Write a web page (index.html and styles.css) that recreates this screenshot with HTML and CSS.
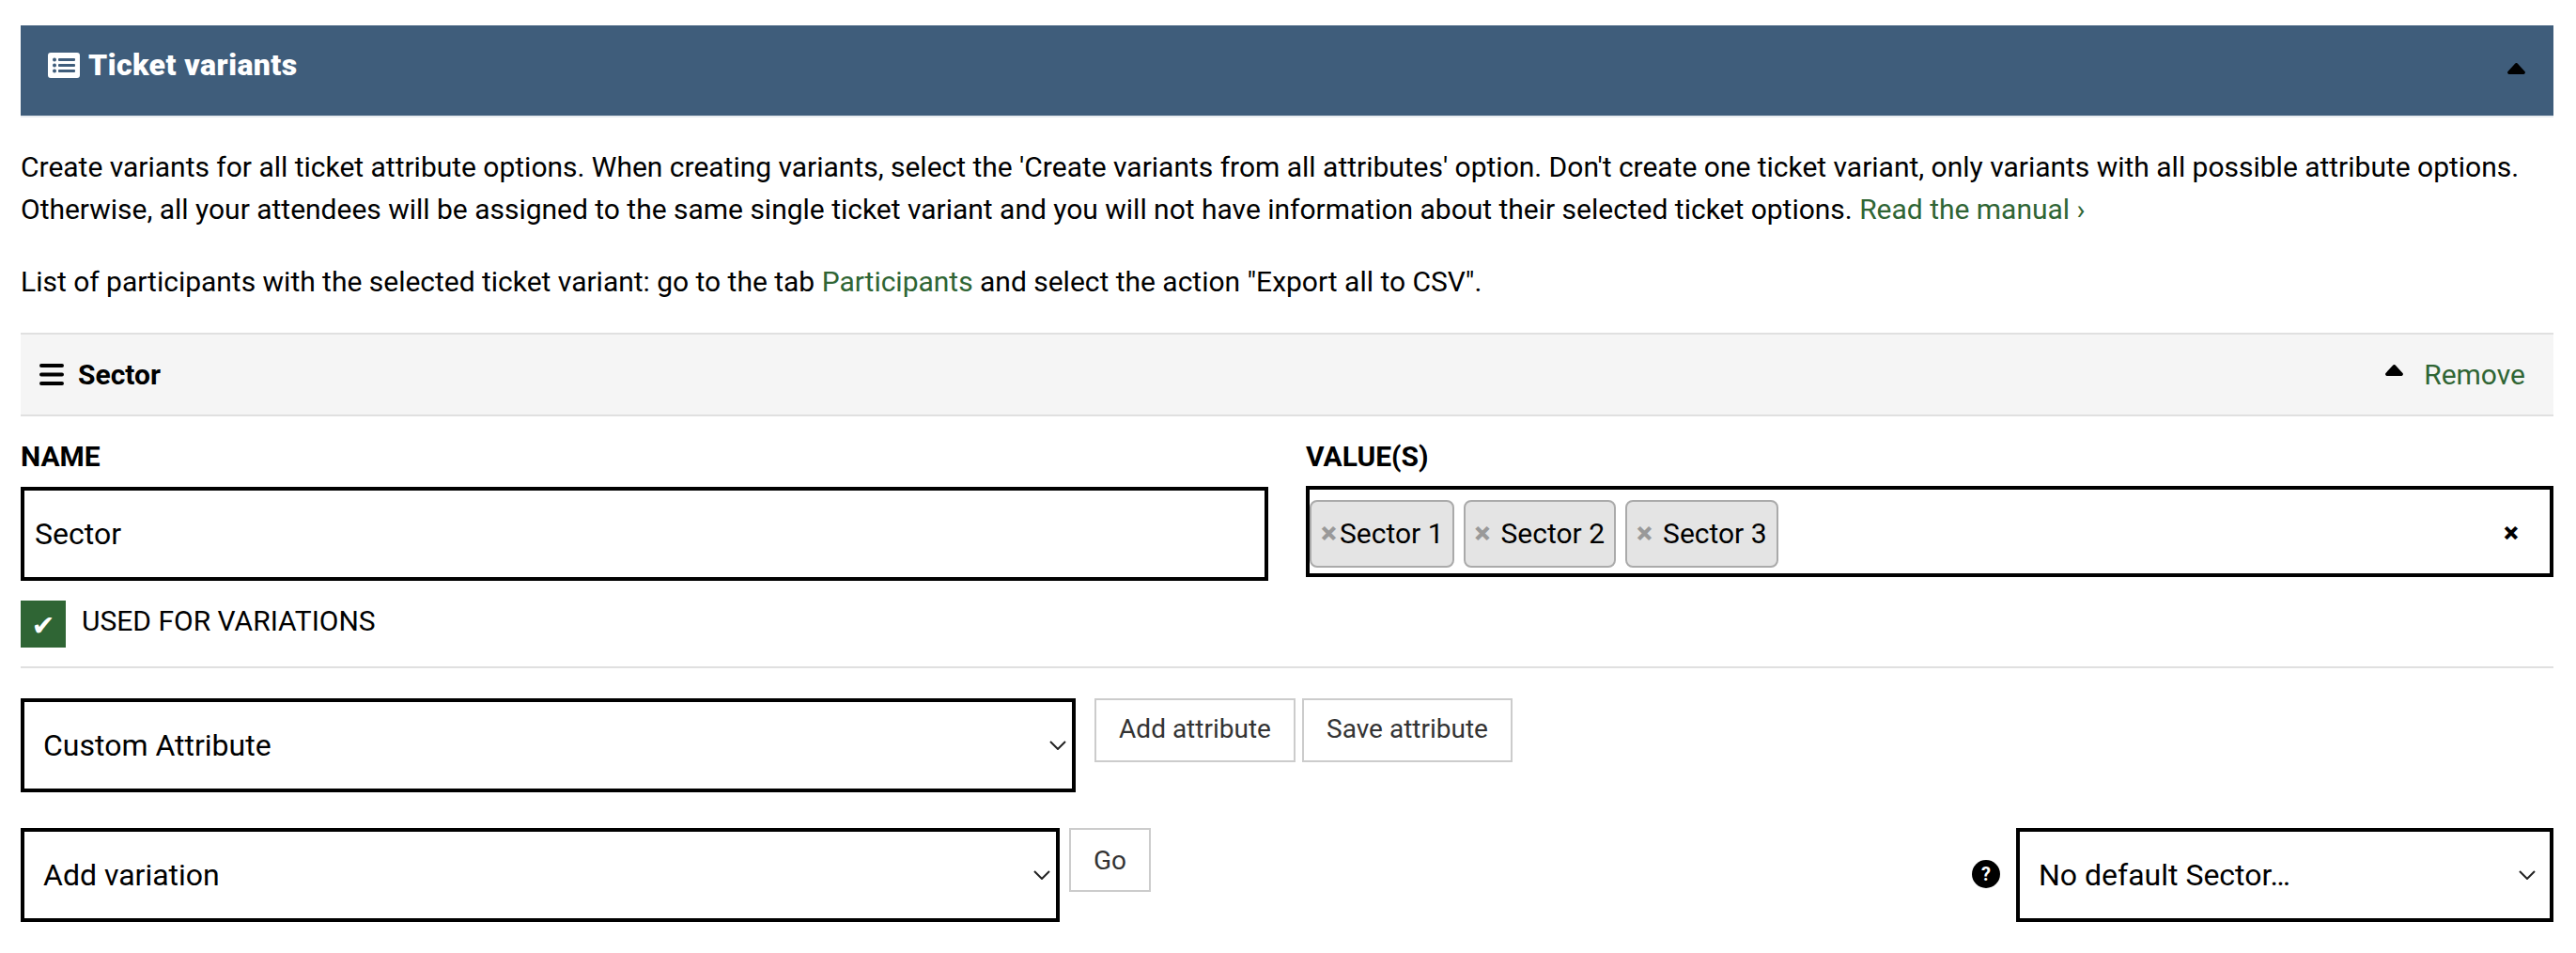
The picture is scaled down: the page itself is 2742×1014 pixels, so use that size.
FILE: index.html
```html
<!DOCTYPE html>
<html lang="en">
<head>
<meta charset="utf-8">
<title>Ticket variants</title>
<link rel="stylesheet" href="styles.css">
</head>
<body>
<main class="panel">
  <header class="panel-head">
    <h2 class="panel-title">
      <svg class="list-icon" viewBox="0 0 34 27" aria-hidden="true"><path fill="#fff" fill-rule="evenodd" d="M3 0h28a3 3 0 0 1 3 3v21a3 3 0 0 1-3 3H3a3 3 0 0 1-3-3V3a3 3 0 0 1 3-3zM12 6a1 1 0 0 0-1 1v1a1 1 0 0 0 1 1h16a1 1 0 0 0 1-1V7a1 1 0 0 0-1-1zM12 12a1 1 0 0 0-1 1v1a1 1 0 0 0 1 1h16a1 1 0 0 0 1-1v-1a1 1 0 0 0-1-1zM12 18a1 1 0 0 0-1 1v1a1 1 0 0 0 1 1h16a1 1 0 0 0 1-1v-1a1 1 0 0 0-1-1zM7 5.500a2 2 0 1 0 0 4 2 2 0 0 0 0-4zM7 11.500a2 2 0 1 0 0 4 2 2 0 0 0 0-4zM7 17.500a2 2 0 1 0 0 4 2 2 0 0 0 0-4z"/></svg>
      Ticket variants
    </h2>
    <svg class="caret" viewBox="0 0 19 12" aria-hidden="true"><path d="M8.300 .6a1.600 1.600 0 0 1 2.400 0l7.800 8.300c.9 1 .3 3-1.200 3H1.700C.2 11.900-.4 9.900.5 8.900z"/></svg>
  </header>

  <p class="intro">Create variants for all ticket attribute options. When creating variants, select the 'Create variants from all attributes' option. Don't create one ticket variant, only variants with all possible attribute options. Otherwise, all your attendees will be assigned to the same single ticket variant and you will not have information about their selected ticket options. <a href="#">Read the manual ›</a></p>
  <p class="intro intro-second">List of participants with the selected ticket variant: go to the tab <a href="#">Participants</a> and select the action "Export all to CSV".</p>

  <section class="attr-head">
    <div class="attr-name">
      <svg class="menu-icon" viewBox="0 0 26 23" aria-hidden="true"><path d="M2 2h22M2 11.500h22M2 21h22"/></svg>
      <strong>Sector</strong>
    </div>
    <div class="attr-actions">
      <svg class="caret" viewBox="0 0 19 12" aria-hidden="true"><path d="M8.300 .6a1.600 1.600 0 0 1 2.400 0l7.800 8.300c.9 1 .3 3-1.200 3H1.700C.2 11.900-.4 9.900.5 8.900z"/></svg>
      <a href="#">Remove</a>
    </div>
  </section>

  <section class="fields">
    <div class="field">
      <label class="field-label" for="attr-name">NAME</label>
      <input class="text-input" id="attr-name" type="text" value="Sector">
      <div class="check-row">
        <span class="checkbox">✔</span>
        <span class="check-label">USED FOR VARIATIONS</span>
      </div>
    </div>
    <div class="field">
      <span class="field-label">VALUE(S)</span>
      <div class="tags">
        <span class="tag tag-tight"><span class="tag-x">×</span>Sector 1</span>
        <span class="tag"><span class="tag-x">×</span>Sector 2</span>
        <span class="tag"><span class="tag-x">×</span>Sector 3</span>
        <span class="tags-clear">×</span>
      </div>
    </div>
  </section>

  <hr class="divider">

  <div class="action-row first-row">
    <div class="select-wrap wrap-attr">
      <select class="select"><option>Custom Attribute</option></select>
      <svg class="chevron" viewBox="0 0 18 10" aria-hidden="true"><path d="M1 1l8 8 8-8"/></svg>
    </div>
    <button class="btn btn-add" type="button">Add attribute</button>
    <button class="btn btn-save" type="button">Save attribute</button>
  </div>

  <div class="action-row second-row">
    <div class="select-wrap wrap-var">
      <select class="select"><option>Add variation</option></select>
      <svg class="chevron" viewBox="0 0 18 10" aria-hidden="true"><path d="M1 1l8 8 8-8"/></svg>
    </div>
    <button class="btn btn-go" type="button">Go</button>
    <span class="help">?</span>
    <div class="select-wrap wrap-default">
      <select class="select"><option>No default Sector…</option></select>
      <svg class="chevron chevron-inset" viewBox="0 0 18 10" aria-hidden="true"><path d="M1 1l8 8 8-8"/></svg>
    </div>
  </div>
</main>
</body>
</html>
```

FILE: styles.css
```css
* { box-sizing: border-box; }
html, body { margin: 0; background: #fff; }
body { font-family: Roboto, "Liberation Sans", sans-serif; font-size: 30px; line-height: 45px; color: #000; }
a { color: #2f6534; text-decoration: none; }
.panel { width: 2696px; margin: 27px 0 0 22px; }
.panel-head { height: 98px; background: #3f5d7b; border-bottom: 2px solid #e8ecf0; display: flex; justify-content: space-between; align-items: flex-start; padding: 22px 30px 0 29px; }
.panel-title { margin: 0; font-size: 32px; line-height: 40px; font-weight: 900; letter-spacing: .45px; color: #fff; display: flex; align-items: center; gap: 9px; }
.list-icon { width: 34px; height: 27px; }
.panel-head .caret { margin-top: 18px; }
.caret { width: 19px; height: 12px; fill: #000; display: block; }
.intro { margin: 30px 0 0; letter-spacing: -.012px; }
.intro-second { margin-top: 32px; }
.attr-head { height: 89px; margin-top: 32px; background: #f5f5f5; border-top: 2px solid #e0e0e0; border-bottom: 2px solid #e0e0e0; display: flex; justify-content: space-between; align-items: center; padding: 0 30px 0 20px; }
.attr-name { display: flex; align-items: center; gap: 15px; }
.attr-name strong { font-weight: 700; }
.menu-icon { width: 26px; height: 23px; stroke: #000; stroke-width: 4px; stroke-linecap: round; fill: none; }
.attr-actions { display: flex; align-items: center; gap: 22px; }
.attr-actions .caret { margin-top: -9px; }
.fields { display: grid; grid-template-columns: 1328px 1328px; column-gap: 40px; margin-top: 20px; }
.field { display: flex; flex-direction: column; }
.field-label { font-weight: 700; line-height: 45px; margin-bottom: 10px; }
.text-input { height: 100px; width: 100%; border: 4px solid #000; border-radius: 0; padding: 0 11px; font: inherit; font-size: 32px; color: #000; background: #fff; outline: none; }
.check-row { display: flex; align-items: flex-start; gap: 17px; margin-top: 21px; }
.checkbox { width: 48px; height: 50px; background: #2f6534; color: #fff; font-family: "DejaVu Sans", sans-serif; font-size: 30px; line-height: 54px; text-align: center; }
.check-label { line-height: 44px; }
.tags { height: 97px; margin-top: -1px; border: 4px solid #000; display: flex; align-items: center; gap: 10px; padding: 5px 0 0; position: relative; }
.tag { height: 72px; background: #e4e4e4; border: 2px solid #aaa; border-radius: 8px; display: flex; align-items: center; padding: 0 10px 2px; color: #000; }
.tag-x { color: #999; font-size: 32px; font-weight: 900; width: 16px; margin-right: 12px; line-height: 1; text-align: center; }
.tag-tight { padding-right: 9px; }
.tag-tight .tag-x { margin-right: 4px; }
.tags-clear { position: absolute; right: 33px; top: calc(50% + 1px); transform: translateY(-50%); font-weight: 900; line-height: 1; }
.divider { border: 0; height: 2px; background: #e0e0e0; margin: 20px 0 0; }
.action-row { display: flex; align-items: flex-start; }
.first-row { margin-top: 32px; }
.second-row { margin-top: 38px; }
.select-wrap { position: relative; height: 100px; }
.wrap-attr { width: 1123px; }
.wrap-var { width: 1106px; }
.wrap-default { width: 572px; }
.select { width: 100%; height: 100%; appearance: none; -webkit-appearance: none; border: 4px solid #000; border-radius: 0; background: #fff; padding: 0 20px; font: inherit; font-size: 32px; color: #000; outline: none; }
.chevron { position: absolute; right: 10px; top: 45px; width: 18px; height: 10px; fill: none; stroke: #222; stroke-width: 2px; }
.chevron-inset { right: 19px; }
.btn { height: 68px; border: 2px solid #ccc; background: #fff; color: #333; font-family: inherit; font-size: 28px; padding: 0 0 3px; }
.btn-add { width: 214px; margin-left: 20px; }
.btn-save { width: 224px; margin-left: 7px; }
.btn-go { width: 87px; margin-left: 10px; padding-bottom: 0; }
.help { width: 30px; height: 30px; margin: 34px 17px 0 auto; border-radius: 50%; background: #000; color: #fff; font-size: 20px; font-weight: 700; line-height: 30px; text-align: center; }
```
